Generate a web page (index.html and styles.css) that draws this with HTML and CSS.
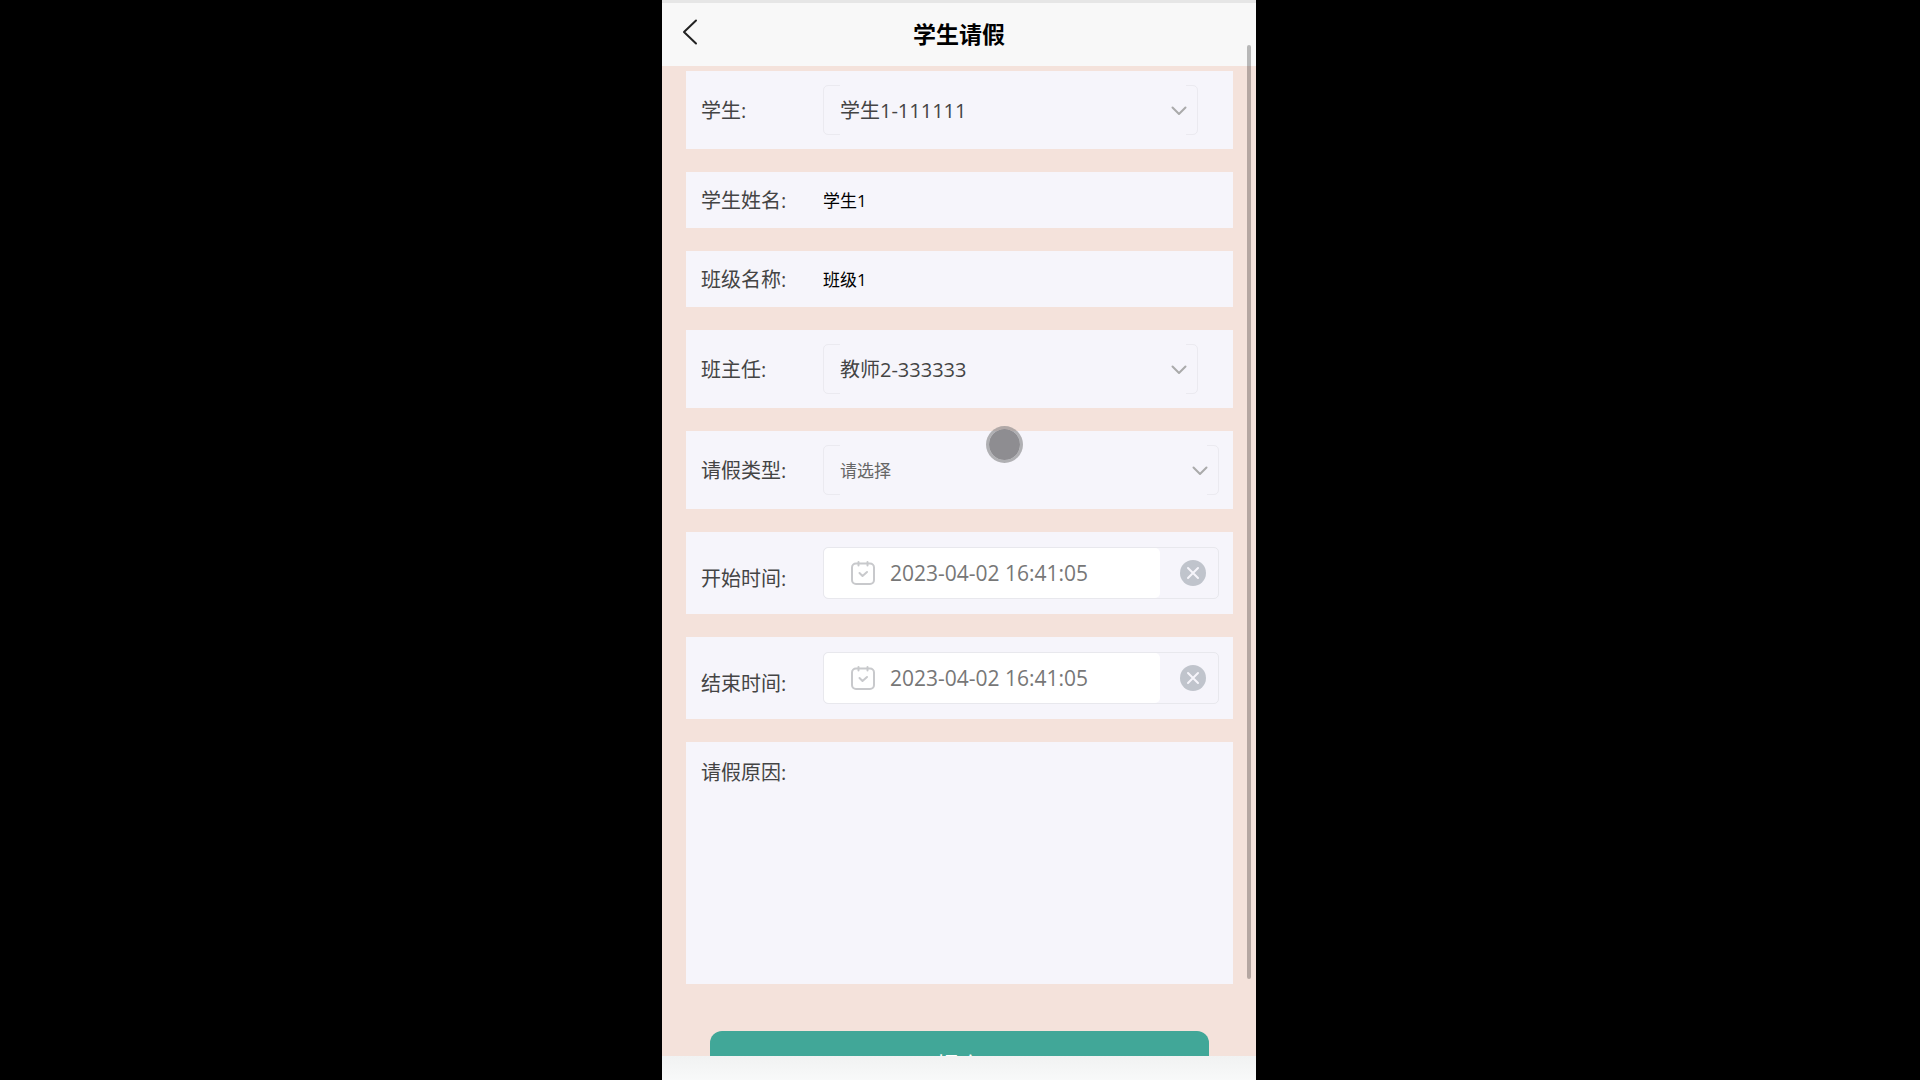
FILE: index.html
```html
<!DOCTYPE html>
<html lang="zh-CN">
<head>
  <meta charset="UTF-8" />
  <meta name="viewport" content="width=device-width, initial-scale=1.0"/>
  <title>学生请假</title>
  <link rel="stylesheet" href="styles.css">
</head>
<body>

<div class="phone">
  <header class="navbar">
    <button type="button" class="back" aria-label="返回">
      <svg width="16" height="26" viewBox="0 0 16 26"><path d="M14 1.5 2 13l12 11.5"/></svg>
    </button>
    <h1>学生请假</h1>
  </header>

  <main class="content">
    <form class="form">
      <div class="row">
        <label for="student">学生:</label>
        <div class="select short">
          <select id="student" name="student">
            <option>学生1-111111</option>
          </select>
          <svg class="arrow" width="16" height="10" viewBox="0 0 16 10"><path d="M1.5 1.5 8 8l6.5-6.5"/></svg>
        </div>
      </div>

      <div class="row">
        <label for="studentName">学生姓名:</label>
        <input type="text" id="studentName" class="plain" value="学生1" />
      </div>

      <div class="row">
        <label for="className">班级名称:</label>
        <input type="text" id="className" class="plain" value="班级1" />
      </div>

      <div class="row">
        <label for="teacher">班主任:</label>
        <div class="select short">
          <select id="teacher" name="teacher">
            <option>教师2-333333</option>
          </select>
          <svg class="arrow" width="16" height="10" viewBox="0 0 16 10"><path d="M1.5 1.5 8 8l6.5-6.5"/></svg>
        </div>
      </div>

      <div class="row">
        <label for="leaveType">请假类型:</label>
        <div class="select">
          <select id="leaveType" name="leaveType" class="placeholder">
            <option>请选择</option>
          </select>
          <svg class="arrow" width="16" height="10" viewBox="0 0 16 10"><path d="M1.5 1.5 8 8l6.5-6.5"/></svg>
        </div>
      </div>

      <div class="row date-row">
        <label for="startTime">开始时间:</label>
        <div class="date">
          <div class="date-value">
            <svg class="calendar" width="26" height="26" viewBox="0 0 26 26">
              <rect x="2" y="3.5" width="22" height="20.5" rx="4"/>
              <path d="M8.5 2v3.5M17.5 2v3.5M9.500 13l3 3 4.500-4"/>
            </svg>
            <input type="text" id="startTime" value="2023-04-02 16:41:05" />
          </div>
          <button type="button" class="clear" aria-label="清除开始时间">
            <svg width="26" height="26" viewBox="0 0 26 26"><circle cx="13" cy="13" r="13"/><path d="m8 8 10 10M18 8 8 18"/></svg>
          </button>
        </div>
      </div>

      <div class="row date-row">
        <label for="endTime">结束时间:</label>
        <div class="date">
          <div class="date-value">
            <svg class="calendar" width="26" height="26" viewBox="0 0 26 26">
              <rect x="2" y="3.5" width="22" height="20.5" rx="4"/>
              <path d="M8.5 2v3.5M17.5 2v3.5M9.500 13l3 3 4.500-4"/>
            </svg>
            <input type="text" id="endTime" value="2023-04-02 16:41:05" />
          </div>
          <button type="button" class="clear" aria-label="清除结束时间">
            <svg width="26" height="26" viewBox="0 0 26 26"><circle cx="13" cy="13" r="13"/><path d="m8 8 10 10M18 8 8 18"/></svg>
          </button>
        </div>
      </div>

      <div class="row reason-row">
        <label for="reason">请假原因:</label>
        <textarea id="reason" name="reason"></textarea>
      </div>

      <button type="submit" class="submit">提交</button>
    </form>
  </main>

  <footer class="bottom-bar"></footer>

  <div class="scrollbar"></div>
  <div class="touch"></div>
</div>

</body>
</html>
```
FILE: styles.css
```css
* { box-sizing: border-box; }
body {
  margin: 0;
  padding-right: 2px;
  background: #000;
  font-family: "Open Sans", "Noto Sans CJK SC", sans-serif;
}
button, input, select, textarea {
  margin: 0;
  padding: 0;
  border: none;
  outline: none;
  background: none;
  font-family: inherit;
}
svg {
  display: block;
  fill: none;
  stroke-linecap: round;
  stroke-linejoin: round;
}
.phone {
  position: relative;
  display: flex;
  flex-direction: column;
  max-width: 594px;
  height: 100vh;
  margin: 0 auto;
  overflow: hidden;
  background: #f4e2db;
}

/* top bar */
.navbar {
  display: grid;
  grid-template-columns: 60px 1fr 60px;
  align-items: center;
  padding: 9px 0;
  border-top: 3px solid #e6e6e6;
  background: #f8f8f8;
}
.navbar h1 {
  grid-column: 2;
  margin: 0;
  font-size: 23px;
  line-height: 45px;
  text-align: center;
  color: #000;
}
.back {
  padding: 0 0 6px 20px;
  cursor: pointer;
}
.back svg {
  stroke: #222;
  stroke-width: 2;
}

/* form */
.content {
  flex: 1;
  min-height: 0;
  overflow: hidden;
}
.form {
  display: flex;
  flex-direction: column;
  gap: 23px;
  padding: 5px 23px 23px 24px;
}
.row {
  display: flex;
  align-items: center;
  padding: 14px 14px 14px 15px;
  background: #f6f5fb;
}
.row label {
  flex: 0 0 122px;
  padding-top: 2px;
  font-size: 20px;
  line-height: 26px;
  color: #444;
}
.plain {
  flex: 1;
  min-width: 0;
  height: 28px;
  padding-bottom: 2px;
  font-size: 17px;
  color: #000;
}
.select {
  position: relative;
  display: flex;
  flex: 1;
  min-width: 0;
  height: 50px;
  padding: 0 11px 0 16px;
  border: 1px solid #ebeaf0;
  border-radius: 5px;
}
.select.short { margin-right: 21px; }
.select select {
  flex: 1;
  min-width: 0;
  margin: -1px 0;
  appearance: none;
  border-radius: 0;
  background: #f6f5fb;
  font-size: 20px;
  color: #444;
}
.select .placeholder {
  font-size: 17px;
  color: #666;
}
.arrow {
  position: absolute;
  top: 20px;
  right: 10px;
  stroke: #aaa;
  stroke-width: 2;
  pointer-events: none;
}
.date-row { padding: 15px 14px 15px 15px; }
.date-row label { padding-top: 11px; }
.date {
  display: flex;
  flex: 1;
  min-width: 0;
  height: 52px;
  border: 1px solid #e8e8ed;
  border-radius: 5px;
}
.date-value {
  display: flex;
  flex: 1;
  align-items: center;
  gap: 14px;
  min-width: 0;
  padding-left: 26px;
  border-radius: 5px;
  background: #fff;
}
.date-value input {
  flex: 1;
  min-width: 0;
  font-size: 21px;
  color: #777;
}
.calendar {
  stroke: #c8c9cc;
  stroke-width: 2;
}
.clear {
  flex: 0 0 58px;
  padding-left: 20px;
  cursor: pointer;
}
.clear circle { fill: #c0c4cc; }
.clear path {
  stroke: #f6f5fb;
  stroke-width: 2;
}
.reason-row { align-items: flex-start; }
.reason-row label { padding-top: 4px; }
.reason-row textarea {
  flex: 1;
  min-width: 0;
  height: 214px;
  resize: none;
  font-size: 17px;
  line-height: 28px;
}
.submit {
  margin: 24px 24px 0;
  border-radius: 12px;
  background: #41a798;
  color: #fff;
  font-size: 23px;
  line-height: 68px;
  cursor: pointer;
}
.bottom-bar {
  height: 24px;
  background: linear-gradient(#f1f2f2, #f8f9f9);
}

/* overlays */
.scrollbar {
  position: absolute;
  top: 45px;
  right: 5px;
  bottom: 101px;
  width: 4px;
  border-radius: 2px;
  background: rgba(0, 0, 0, 0.26);
}
.touch {
  position: absolute;
  top: 426px;
  left: 324px;
  width: 37px;
  height: 37px;
  border: 3px solid rgba(130, 130, 132, 0.6);
  border-radius: 50%;
  background: #8e8d91;
  background-clip: padding-box;
}
```
